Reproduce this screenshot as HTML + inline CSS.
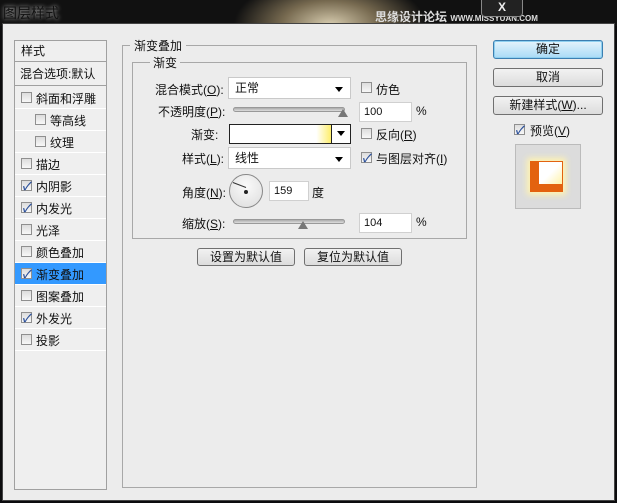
<!DOCTYPE html><html><head><meta charset="utf-8"><style>
*{margin:0;padding:0;box-sizing:border-box}
body{width:617px;height:503px;overflow:hidden;background:#0b0b0d;font-family:"Liberation Sans","Noto Sans CJK SC",sans-serif;font-size:12px;color:#111;position:relative}
.a{position:absolute}
.t{white-space:nowrap}
.cb{position:absolute;width:11px;height:11px;border:1px solid #8f8f8f;background:linear-gradient(#ddd,#f8f8f8)}
.cb.c::after{content:"✓";position:absolute;left:0;top:-3px;font-size:11px;color:#2a4f9a;font-weight:bold}
.row{position:absolute;left:15px;width:91px;height:22px;border-bottom:1px solid #fff}
.btn{position:absolute;border:1px solid #707070;border-radius:3px;background:linear-gradient(#f2f2f2,#dcdcdc);text-align:center;line-height:16px}
.in{position:absolute;background:#fff;border:1px solid #d0d0d0;height:20px;line-height:18px;padding-left:4px;font-size:11px}
.sel{position:absolute;background:#fff;border:1px solid #c9c9c9;height:22px;line-height:20px;padding-left:6px}
.sel::after{content:"";position:absolute;right:7px;top:9px;border:4px solid transparent;border-top:5px solid #000;border-bottom:0}
.sl{position:absolute;height:5px;border:1px solid #999;border-radius:3px;background:linear-gradient(#aaa,#ddd)}
.tri{position:absolute;width:0;height:0;border-left:5px solid transparent;border-right:5px solid transparent;border-bottom:8px solid #777}
</style></head><body>
<div class="a" style="left:0;top:0;width:617px;height:26px;background:radial-gradient(ellipse 120px 60px at 330px 25px,#d8cdb0 0,#776a50 40%,#111 80%)"></div>
<div class="a t" style="left:3px;top:3px;font-size:14px;color:#111;text-shadow:0 0 4px #ccc">图层样式</div>
<div class="a t" style="left:375px;top:8px;font-size:12px;color:#ddd;font-weight:bold">思缘设计论坛 <span style="font-size:8px">WWW.MISSYUAN.COM</span></div>
<div class="a" style="left:481px;top:-2px;width:42px;height:19px;border:1px solid #888;border-radius:0 0 4px 4px;background:#222;color:#eee;text-align:center;font-weight:bold;line-height:16px">X</div>
<div class="a" style="left:2px;top:23px;width:613px;height:478px;background:#ececec;border:1px solid #444"></div>
<!-- left list -->
<div class="a" style="left:14px;top:40px;width:93px;height:450px;border:1px solid #a0a0a0;background:#efefef"></div>
<div class="row" style="top:41px;height:21px;border-bottom:1px solid #a0a0a0"><span class="a t" style="left:6px;top:1px">样式</span></div>
<div class="row" style="top:63px;height:23px;border-bottom:1px solid #a0a0a0"><span class="a t" style="left:5px;top:2px">混合选项:默认</span></div>
<div class="row" style="top:87px"><i class="cb" style="left:6px;top:5px"></i><span class="a t" style="left:21px;top:3px">斜面和浮雕</span></div>
<div class="row" style="top:109px"><i class="cb" style="left:20px;top:5px"></i><span class="a t" style="left:35px;top:3px">等高线</span></div>
<div class="row" style="top:131px"><i class="cb" style="left:20px;top:5px"></i><span class="a t" style="left:35px;top:3px">纹理</span></div>
<div class="row" style="top:153px"><i class="cb" style="left:6px;top:5px"></i><span class="a t" style="left:21px;top:3px">描边</span></div>
<div class="row" style="top:175px"><i class="cb c" style="left:6px;top:5px"></i><span class="a t" style="left:21px;top:3px">内阴影</span></div>
<div class="row" style="top:197px"><i class="cb c" style="left:6px;top:5px"></i><span class="a t" style="left:21px;top:3px">内发光</span></div>
<div class="row" style="top:219px"><i class="cb" style="left:6px;top:5px"></i><span class="a t" style="left:21px;top:3px">光泽</span></div>
<div class="row" style="top:241px"><i class="cb" style="left:6px;top:5px"></i><span class="a t" style="left:21px;top:3px">颜色叠加</span></div>
<div class="row" style="top:263px;background:#3399ff"><i class="cb c" style="left:6px;top:5px"></i><span class="a t" style="left:21px;top:3px">渐变叠加</span></div>
<div class="row" style="top:285px"><i class="cb" style="left:6px;top:5px"></i><span class="a t" style="left:21px;top:3px">图案叠加</span></div>
<div class="row" style="top:307px"><i class="cb c" style="left:6px;top:5px"></i><span class="a t" style="left:21px;top:3px">外发光</span></div>
<div class="row" style="top:329px"><i class="cb" style="left:6px;top:5px"></i><span class="a t" style="left:21px;top:3px">投影</span></div>
<!-- main -->
<div class="a" style="left:122px;top:45px;width:355px;height:443px;border:1px solid #a8a8a8"></div>
<div class="a t" style="left:130px;top:37px;background:#ececec;padding:0 4px">渐变叠加</div>
<div class="a" style="left:132px;top:62px;width:335px;height:177px;border:1px solid #a8a8a8"></div>
<div class="a t" style="left:150px;top:54px;background:#ececec;padding:0 3px">渐变</div>
<div class="a t" style="left:155px;top:81px">混合模式(<u>O</u>):</div>
<div class="sel t" style="left:228px;top:77px;width:123px">正常</div>
<i class="cb" style="left:361px;top:82px"></i><span class="a t" style="left:376px;top:81px">仿色</span>
<div class="a t" style="left:158px;top:103px">不透明度(<u>P</u>):</div>
<div class="sl" style="left:233px;top:107px;width:112px"></div><div class="tri" style="left:338px;top:109px"></div>
<div class="in" style="left:359px;top:102px;width:53px">100</div><span class="a" style="left:416px;top:104px">%</span>
<div class="a t" style="left:191px;top:126px">渐变:</div>
<div class="a" style="left:229px;top:124px;width:122px;height:20px;border:1px solid #222;background:linear-gradient(90deg,#fff 0,#fff 72%,#fef07a 83%,#f8ea30 92%,#fff 92%)"></div>
<div class="a" style="left:331px;top:125px;width:19px;height:18px;border-left:1px solid #222;background:#fff"><div class="a" style="left:5px;top:6px;border:4px solid transparent;border-top:5px solid #000;border-bottom:0"></div></div>
<i class="cb" style="left:361px;top:128px"></i><span class="a t" style="left:376px;top:126px">反向(<u>R</u>)</span>
<div class="a t" style="left:182px;top:150px">样式(<u>L</u>):</div>
<div class="sel t" style="left:228px;top:147px;width:123px">线性</div>
<i class="cb c" style="left:361px;top:152px"></i><span class="a t" style="left:376px;top:150px">与图层对齐(<u>I</u>)</span>
<div class="a t" style="left:182px;top:184px">角度(<u>N</u>):</div>
<div class="a" style="left:229px;top:174px;width:34px;height:34px;border-radius:50%;border:1px solid #888;background:radial-gradient(circle at 50% 35%,#fafafa,#dcdcdc)"></div>
<div class="a" style="left:232px;top:187px;width:14px;height:1px;background:#333;transform:rotate(21deg);transform-origin:right"></div>
<div class="a" style="left:244px;top:190px;width:4px;height:4px;border-radius:50%;background:#222"></div>
<div class="in" style="left:269px;top:181px;width:40px">159</div><span class="a t" style="left:312px;top:184px">度</span>
<div class="a t" style="left:182px;top:215px">缩放(<u>S</u>):</div>
<div class="sl" style="left:233px;top:219px;width:112px"></div><div class="tri" style="left:298px;top:221px"></div>
<div class="in" style="left:359px;top:213px;width:53px">104</div><span class="a" style="left:416px;top:215px">%</span>
<div class="btn t" style="left:197px;top:248px;width:98px;height:18px">设置为默认值</div>
<div class="btn t" style="left:304px;top:248px;width:98px;height:18px">复位为默认值</div>
<!-- right -->
<div class="btn t" style="left:493px;top:40px;width:110px;height:19px;border-color:#3c7fb1;background:linear-gradient(#e5f4fc,#a9dbf6);box-shadow:0 0 0 1px #8fd0f0 inset">确定</div>
<div class="btn t" style="left:493px;top:68px;width:110px;height:19px">取消</div>
<div class="btn t" style="left:493px;top:96px;width:110px;height:19px">新建样式(<u>W</u>)...</div>
<i class="cb c" style="left:514px;top:124px"></i><span class="a t" style="left:530px;top:122px">预览(<u>V</u>)</span>
<div class="a" style="left:515px;top:144px;width:66px;height:65px;background:#dcdcdc;border:1px solid #bbb"></div>
<div class="a" style="left:530px;top:161px;width:33px;height:31px;background:#e3620f;box-shadow:0 0 6px 3px #fff3b0"></div>
<div class="a" style="left:539px;top:162px;width:23px;height:22px;background:linear-gradient(135deg,#fff 50%,#fff3a8)"></div>
</body></html>
